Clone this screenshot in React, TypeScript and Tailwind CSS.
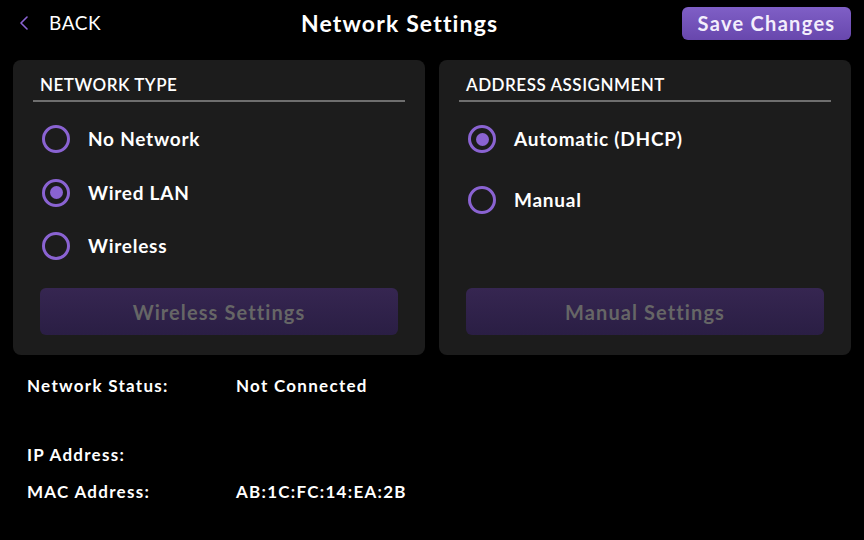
type Option = { label: string; checked?: boolean };

function Radio({ label, checked }: Option) {
  return (
    <div className="flex items-center gap-[18px]">
      <span className="grid place-items-center size-[28px] rounded-full border-[3px] border-[#8a63d2] shrink-0">
        {checked && <span className="size-[13px] rounded-full bg-[#8a63d2]" />}
      </span>
      <span className="text-[19px] font-bold tracking-[0.04em] text-white">{label}</span>
    </div>
  );
}

function Panel({
  title,
  options,
  gap,
  button,
}: {
  title: string;
  options: Option[];
  gap: string;
  button: string;
}) {
  return (
    <section className="flex flex-col rounded-lg bg-[#1c1c1c] px-[20px] pt-[14px] pb-[20px] h-[295px]">
      <h2 className="px-[7px] text-[17px] font-semibold uppercase tracking-[0.03em] text-white leading-[22px]">
        {title}
      </h2>
      <div className="mt-[4px] border-t-2 border-[#6e6e6e]" />
      <div className={`mt-[23px] pl-[9px] flex flex-col ${gap}`}>
        {options.map((o) => (
          <Radio key={o.label} {...o} />
        ))}
      </div>
      <button className="mt-auto mx-[7px] h-[47px] rounded-md bg-gradient-to-b from-[#362651] to-[#2a1e44] text-[20px] font-bold tracking-[0.055em] text-[#666666]">
        {button}
      </button>
    </section>
  );
}

export default function App() {
  return (
    <div className="w-[864px] h-[540px] bg-black text-white font-['Lato',sans-serif] overflow-hidden">
      <header className="flex items-center h-[46px] pl-[19px] pr-[13px]">
        <button className="flex items-center gap-[21px] text-[19px] text-white tracking-[0.03em]">
          <svg width="9" height="14" viewBox="0 0 9 14" fill="none" className="text-[#8a63d2]">
            <path d="M8 1L2 7l6 6" stroke="currentColor" strokeWidth="1.6" strokeLinecap="round" strokeLinejoin="round" />
          </svg>
          BACK
        </button>
        <h1 className="flex-1 text-center pl-[16px] text-[23px] font-bold tracking-[0.05em]">Network Settings</h1>
        <button className="h-[33px] w-[169px] rounded-md bg-gradient-to-b from-[#7f5fc6] to-[#6847ad] text-[20px] font-bold tracking-[0.065em] text-[#f3eefc]">
          Save Changes
        </button>
      </header>

      <div className="grid grid-cols-2 gap-[14px] px-[13px] mt-[14px]">
        <Panel
          title="Network Type"
          options={[{ label: "No Network" }, { label: "Wired LAN", checked: true }, { label: "Wireless" }]}
          gap="gap-[25px]"
          button="Wireless Settings"
        />
        <Panel
          title="Address Assignment"
          options={[{ label: "Automatic (DHCP)", checked: true }, { label: "Manual" }]}
          gap="gap-[32px]"
          button="Manual Settings"
        />
      </div>

      <dl className="mt-[20px] px-[27px] grid grid-cols-[209px_1fr] text-[17px] font-bold tracking-[0.075em] leading-[22px]">
        <dt>Network Status:</dt>
        <dd>Not Connected</dd>
        <dt className="mt-[47px]">IP Address:</dt>
        <dd className="mt-[47px]"></dd>
        <dt className="mt-[15px]">MAC Address:</dt>
        <dd className="mt-[15px]">AB:1C:FC:14:EA:2B</dd>
      </dl>
    </div>
  );
}
